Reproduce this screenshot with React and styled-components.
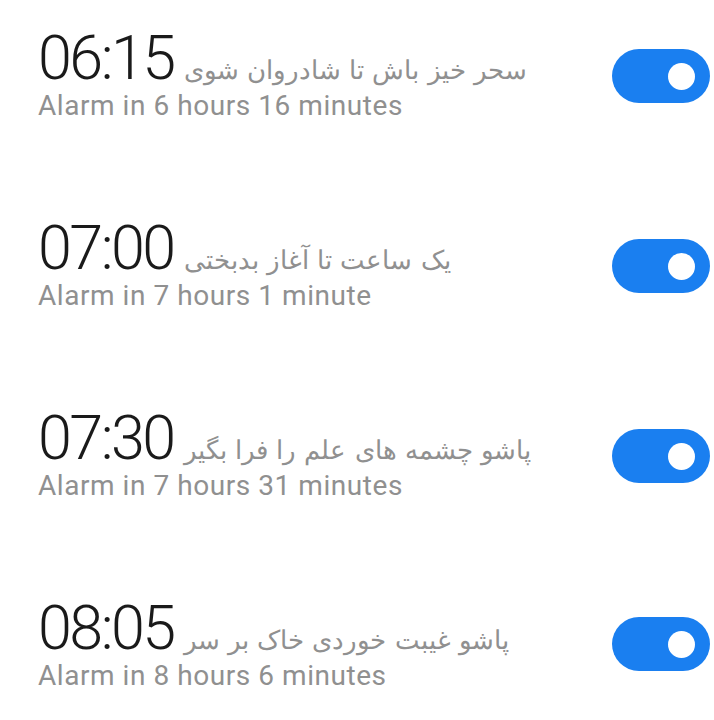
import React from "react";
import styled, { createGlobalStyle } from "styled-components";

const GlobalStyle = createGlobalStyle`
  html, body {
    margin: 0;
    padding: 0;
    background: #ffffff;
  }
  body {
    font-family: Roboto, "Liberation Sans", sans-serif;
  }
`;

const Screen = styled.div`
  width: 714px;
  height: 720px;
  display: flex;
  flex-direction: column;
  overflow: hidden;
  background: #ffffff;
`;

const List = styled.div`
  flex: 1;
  display: flex;
  flex-direction: column;
  padding: 27px 0 0 38px;
`;

const Row = styled.div`
  height: 190px;
  display: flex;
  align-items: flex-start;
  justify-content: space-between;
`;

const Info = styled.div`
  display: flex;
  flex-direction: column;
`;

const TitleLine = styled.div`
  display: flex;
  align-items: baseline;
  gap: 10px;
`;

const Time = styled.span`
  font-family: Roboto, sans-serif;
  font-weight: 300;
  font-size: 61px;
  line-height: 62px;
  letter-spacing: -2.5px;
  color: #1a1a1a;
`;

const Label = styled.span`
  direction: rtl;
  font-family: "DejaVu Sans", "Noto Sans", sans-serif;
  font-weight: 300;
  font-size: 26px;
  color: #909090;
`;

const Sub = styled.div`
  margin-top: 1px;
  font-family: Roboto, sans-serif;
  font-size: 28px;
  line-height: 32px;
  letter-spacing: 0.55px;
  color: #909090;
`;

const Switch = styled.div`
  margin-top: ${(p) => p.top}px;
  width: 98px;
  height: 54px;
  border-radius: 27px;
  background: #1a7ff0;
  display: flex;
  align-items: center;
  justify-content: flex-end;
  padding-right: 15px;
  box-sizing: border-box;
  margin-right: 4px;
`;

const Knob = styled.div`
  width: 27px;
  height: 27px;
  border-radius: 50%;
  background: #ffffff;
`;

const BottomShade = styled.div`
  height: 16px;
  background: linear-gradient(#ffffff, #ececec);
`;

const alarms = [
  { time: "06:15", label: "سحر خیز باش تا شادروان شوی", sub: "Alarm in 6 hours 16 minutes", top: 22 },
  { time: "07:00", label: "یک ساعت تا آغاز بدبختی", sub: "Alarm in 7 hours 1 minute", top: 22 },
  { time: "07:30", label: "پاشو چشمه های علم را فرا بگیر", sub: "Alarm in 7 hours 31 minutes", top: 22 },
  { time: "08:05", label: "پاشو غیبت خوردی خاک بر سر", sub: "Alarm in 8 hours 6 minutes", top: 20 },
];

export default function App() {
  return (
    <Screen>
      <GlobalStyle />
      <List>
        {alarms.map((a) => (
          <Row key={a.time}>
            <Info>
              <TitleLine>
                <Time>{a.time}</Time>
                <Label>{a.label}</Label>
              </TitleLine>
              <Sub>{a.sub}</Sub>
            </Info>
            <Switch top={a.top}>
              <Knob />
            </Switch>
          </Row>
        ))}
      </List>
      <BottomShade />
    </Screen>
  );
}
